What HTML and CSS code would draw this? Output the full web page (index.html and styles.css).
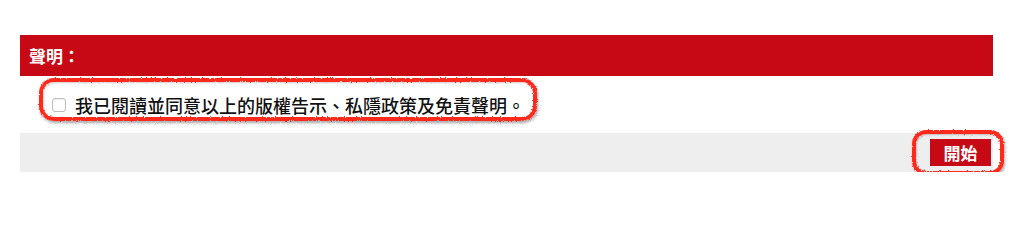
FILE: index.html
```html
<!DOCTYPE html>
<html lang="zh-Hant">
<head>
<meta charset="utf-8">
<title>聲明</title>
<link rel="stylesheet" href="styles.css">
</head>
<body>
<svg class="defs" width="0" height="0" aria-hidden="true">
  <filter id="rough" x="-5%" y="-20%" width="110%" height="140%">
    <feTurbulence type="fractalNoise" baseFrequency="1.2" numOctaves="2" seed="5" result="n"/>
    <feDisplacementMap in="SourceGraphic" in2="n" scale="3" xChannelSelector="R" yChannelSelector="G"/>
  </filter>
</svg>
<div class="panel">
  <div class="panel-head">聲明：</div>
  <div class="agree-row">
    <label class="agree">
      <input type="checkbox" class="check">
      <span class="agree-text">我已閱讀並同意以上的版權告示、私隱政策及免責聲明。</span>
    </label>
  </div>
  <div class="panel-foot">
    <button class="start-btn" type="button">開始</button>
  </div>
  <div class="mark mark-agree"></div>
  <div class="mark mark-btn"></div>
</div>
</body>
</html>
```

FILE: styles.css
```css
html, body {
  margin: 0;
  padding: 0;
  background: #ffffff;
}
body {
  font-family: "Noto Sans CJK TC", "Noto Sans", sans-serif;
  color: #222222;
}
.defs {
  position: absolute;
  width: 0;
  height: 0;
}
.panel {
  position: relative;
  width: 973px;
  margin: 35px 0 0 20px;
}
.panel-head {
  height: 41px;
  background: #c70916;
  color: #ffffff;
  font-weight: 700;
  font-size: 17px;
  line-height: 41px;
  padding-left: 9px;
}
.agree-row {
  height: 57px;
  display: flex;
  align-items: center;
  padding-left: 32px;
}
.agree {
  display: flex;
  align-items: center;
  gap: 9px;
}
.check {
  appearance: none;
  -webkit-appearance: none;
  margin: 0;
  width: 14px;
  height: 14px;
  border: 1px solid #bdbdbd;
  border-radius: 3px;
  background: #ffffff;
  box-shadow: inset 0 1px 1px rgba(0,0,0,0.06);
}
.agree-text {
  font-size: 18px;
  font-weight: 500;
  line-height: 24px;
  color: #111111;
}
.panel-foot {
  height: 39px;
  background: #eeeeee;
  display: flex;
  justify-content: flex-end;
  align-items: center;
  padding-right: 2px;
}
.start-btn {
  width: 61px;
  height: 27px;
  border: 0;
  margin: 0;
  padding: 0;
  background: #c70916;
  color: #ffffff;
  font-family: "Noto Sans CJK TC", "Noto Sans", sans-serif;
  font-weight: 700;
  font-size: 17px;
  line-height: 27px;
}
.mark {
  position: absolute;
  box-sizing: border-box;
  border: 4px solid #ff2b1c;
  border-radius: 15px;
  box-shadow: 1px 2px 3px rgba(0,0,0,0.35), inset 1px 1px 2px rgba(0,0,0,0.2);
  filter: url(#rough);
  pointer-events: none;
}
.mark-agree {
  left: 19px;
  top: 43px;
  width: 498px;
  height: 43px;
}
.mark-btn {
  left: 892px;
  top: 95px;
  width: 92px;
  height: 45px;
  border-radius: 14px;
}
```
